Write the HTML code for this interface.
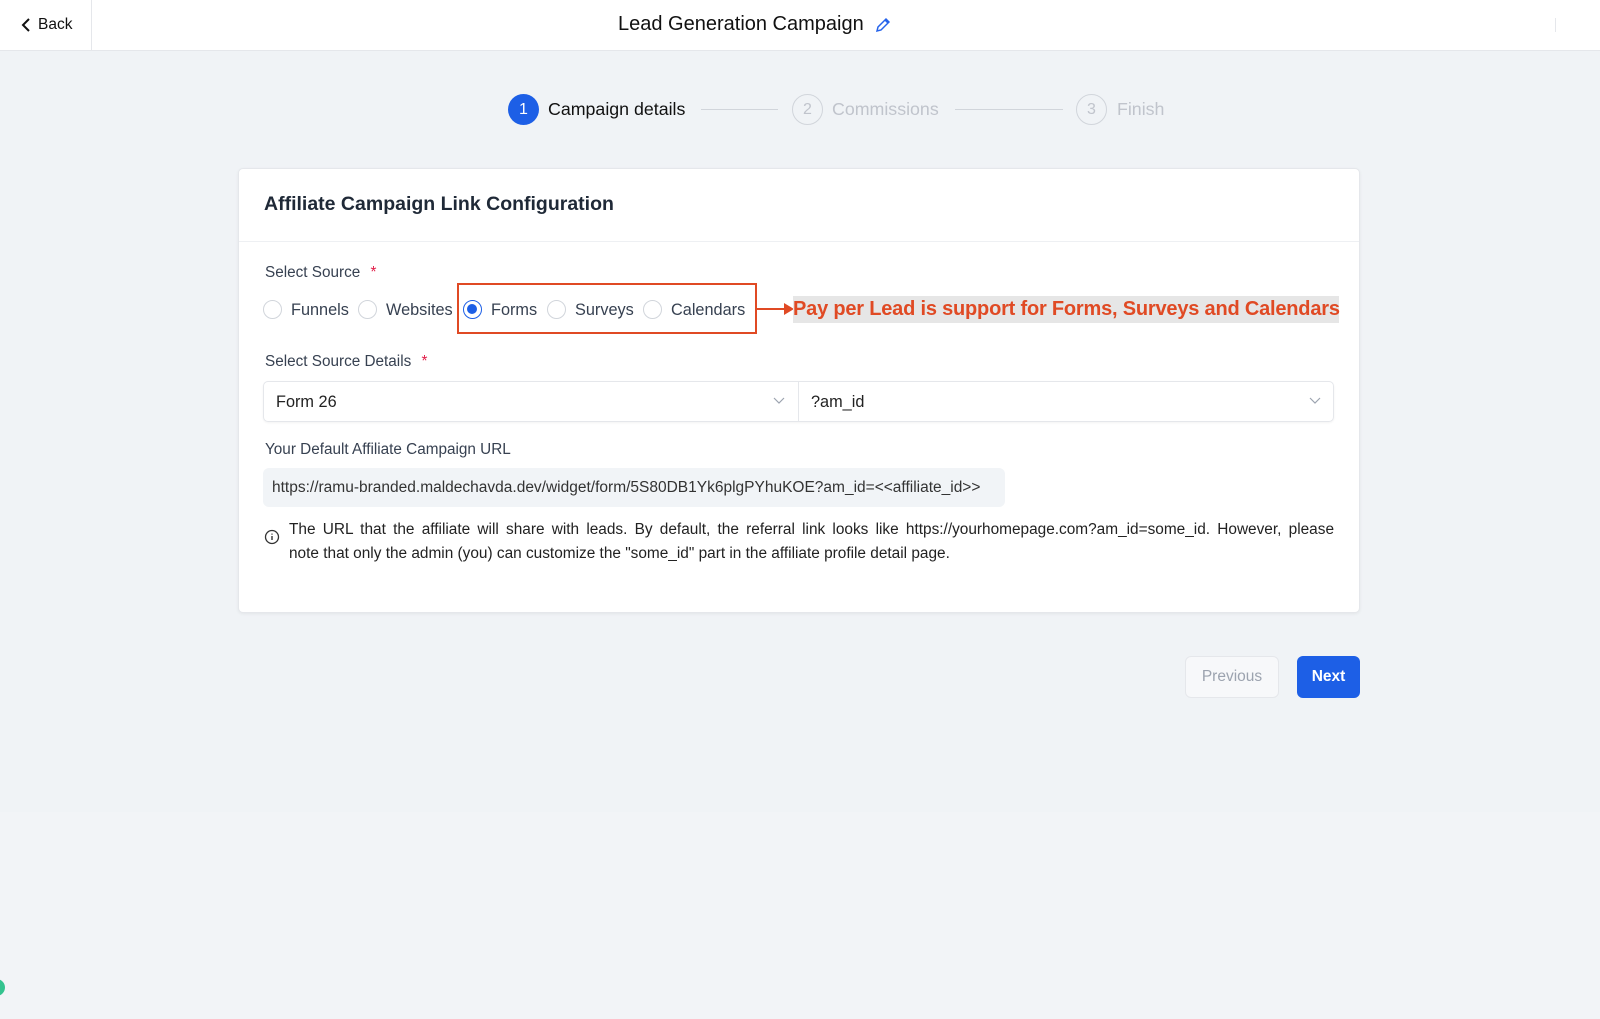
<!DOCTYPE html>
<html><head><meta charset="utf-8"><style>
*{box-sizing:border-box;margin:0;padding:0}
body{width:1600px;height:1019px;background:#f0f3f6;font-family:"Liberation Sans",sans-serif;color:#1f2937;position:relative;overflow:hidden}
.abs{position:absolute}
.hdr{left:0;top:0;width:1600px;height:51px;background:#fff;border-bottom:1px solid #e5e7eb}
.radio{width:19px;height:19px;border:1px solid #d1d5db;border-radius:50%;background:#fff}
.lbl{font-size:15.3px;color:#374151}
.rt{font-size:16.3px;color:#374151}
.circ{width:31px;height:31px;border-radius:50%;display:flex;align-items:center;justify-content:center;font-size:16px}
</style></head><body>
<div class="abs hdr"></div>
<div class="abs" style="left:91px;top:0;width:1px;height:51px;background:#e5e7eb"></div>
<svg class="abs" style="left:20px;top:17px" width="12" height="16" viewBox="0 0 12 16"><path d="M9 2L3 8l6 6" fill="none" stroke="#111" stroke-width="2"/></svg>
<div class="abs" style="left:38px;top:16px;font-size:15.5px;color:#111">Back</div>
<div class="abs" style="left:618px;top:13px;font-size:20px;color:#111">Lead Generation Campaign</div>
<svg class="abs" style="left:874px;top:16px" width="18" height="18" viewBox="0 0 18 18"><path d="M3 15l1-4L12 3l3 3-8 8z M11 4l3 3" fill="none" stroke="#2563eb" stroke-width="1.5"/></svg>
<div class="abs" style="left:1555px;top:18px;width:1px;height:14px;background:#e5e7eb"></div>

<div class="abs circ" style="left:508px;top:94px;background:#1d5fe6;color:#fff">1</div>
<div class="abs" style="left:548px;top:99px;font-size:17.8px;color:#111">Campaign details</div>
<div class="abs" style="left:701px;top:109px;width:77px;height:1px;background:#d1d5db"></div>
<div class="abs circ" style="left:792px;top:94px;border:1.5px solid #d1d5db;color:#c0c4cc">2</div>
<div class="abs" style="left:832px;top:99px;font-size:17.8px;color:#c0c4cc">Commissions</div>
<div class="abs" style="left:955px;top:109px;width:108px;height:1px;background:#d1d5db"></div>
<div class="abs circ" style="left:1076px;top:94px;border:1.5px solid #d1d5db;color:#c0c4cc">3</div>
<div class="abs" style="left:1117px;top:99px;font-size:17.8px;color:#c0c4cc">Finish</div>

<div class="abs" style="left:238px;top:168px;width:1122px;height:445px;background:#fff;border:1px solid #e5e7eb;border-radius:5px;box-shadow:0 1px 3px rgba(0,0,0,.06)"></div>
<div class="abs" style="left:239px;top:241px;width:1120px;height:1px;background:#eef0f3"></div>
<div class="abs" style="left:264px;top:193px;font-size:19.5px;font-weight:bold;color:#1f2937">Affiliate Campaign Link Configuration</div>

<div class="abs lbl" style="left:265px;top:264px">Select Source <span style="color:#e11d48;margin-left:6px">*</span></div>
<div class="abs radio" style="left:263px;top:300px"></div><div class="abs rt" style="left:291px;top:301px">Funnels</div>
<div class="abs radio" style="left:358px;top:300px"></div><div class="abs rt" style="left:386px;top:301px">Websites</div>
<div class="abs radio" style="left:463px;top:300px;border:1.5px solid #1d5fe6"><div style="width:10px;height:10px;border-radius:50%;background:#1d5fe6;margin:3px"></div></div><div class="abs rt" style="left:491px;top:301px">Forms</div>
<div class="abs radio" style="left:547px;top:300px"></div><div class="abs rt" style="left:575px;top:301px">Surveys</div>
<div class="abs radio" style="left:643px;top:300px"></div><div class="abs rt" style="left:671px;top:301px">Calendars</div>
<div class="abs" style="left:457px;top:283px;width:300px;height:51px;border:2px solid #e04a24"></div>
<div class="abs" style="left:757px;top:308px;width:30px;height:2px;background:#e04a24"></div>
<svg class="abs" style="left:784px;top:303px" width="10" height="12"><path d="M0 0L10 6L0 12z" fill="#e04a24"/></svg>
<div class="abs" style="left:793px;top:296px;width:546px;height:27px;background:#e6e6e6"></div>
<div class="abs" style="left:793px;top:298px;font-size:20px;font-weight:bold;color:#e04a24;white-space:nowrap;letter-spacing:-0.2px">Pay per Lead is support for Forms, Surveys and Calendars</div>

<div class="abs lbl" style="left:265px;top:353px">Select Source Details <span style="color:#e11d48;margin-left:6px">*</span></div>
<div class="abs" style="left:263px;top:381px;width:1071px;height:41px;border:1px solid #e5e7eb;border-radius:5px;box-shadow:0 1px 2px rgba(0,0,0,.05)"></div>
<div class="abs" style="left:798px;top:382px;width:1px;height:39px;background:#e5e7eb"></div>
<div class="abs" style="left:276px;top:393px;font-size:16.3px;color:#222">Form 26</div>
<div class="abs" style="left:811px;top:393px;font-size:16.3px;color:#222">?am_id</div>
<svg class="abs" style="left:773px;top:397px" width="12" height="8"><path d="M1 1l5 5 5-5" fill="none" stroke="#9ca3af" stroke-width="1.2"/></svg>
<svg class="abs" style="left:1309px;top:397px" width="12" height="8"><path d="M1 1l5 5 5-5" fill="none" stroke="#9ca3af" stroke-width="1.2"/></svg>

<div class="abs lbl" style="left:265px;top:441px">Your Default Affiliate Campaign URL</div>
<div class="abs" style="left:263px;top:468px;width:742px;height:39px;background:#f1f4f7;border-radius:6px"></div>
<div class="abs" style="left:272px;top:479px;font-size:15.5px;color:#333;white-space:nowrap">https://ramu-branded.maldechavda.dev/widget/form/5S80DB1Yk6plgPYhuKOE?am_id=&lt;&lt;affiliate_id&gt;&gt;</div>
<svg class="abs" style="left:264px;top:529px" width="16" height="16"><circle cx="8" cy="8" r="6.5" fill="none" stroke="#333" stroke-width="1.3"/><path d="M8 7v4M8 4.6v1" stroke="#333" stroke-width="1.4"/></svg>
<div class="abs" style="left:289px;top:518px;width:1045px;font-size:15.4px;line-height:24px;color:#222;text-align:justify;text-align-last:justify;white-space:nowrap">The URL that the affiliate will share with leads. By default, the referral link looks like https://yourhomepage.com?am_id=some_id. However, please</div>
<div class="abs" style="left:289px;top:542px;width:1045px;font-size:15.4px;line-height:24px;color:#222">note that only the admin (you) can customize the "some_id" part in the affiliate profile detail page.</div>

<div class="abs" style="left:1185px;top:656px;width:94px;height:42px;border:1px solid #e5e7eb;border-radius:6px;background:#f7f8fa;color:#9ca3af;font-size:15.5px;text-align:center;line-height:40px">Previous</div>
<div class="abs" style="left:1297px;top:656px;width:63px;height:42px;border-radius:6px;background:#1d5fe6;color:#fff;font-size:15.5px;font-weight:bold;text-align:center;line-height:42px">Next</div>

<div class="abs" style="left:0;top:812px;width:1600px;height:207px;background:#f2f4f7"></div>
<div class="abs" style="left:-12px;top:979px;width:17px;height:17px;border-radius:50%;background:#34c38f"></div>
</body></html>
